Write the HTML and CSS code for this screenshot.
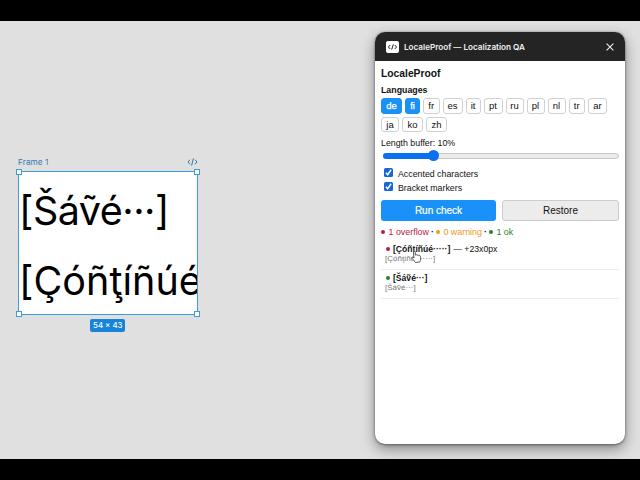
FILE: index.html
```
<!DOCTYPE html>
<html lang="en">
<head>
<meta charset="utf-8">
<title>LocaleProof</title>
<link rel="stylesheet" href="styles.css">
</head>
<body>
<main class="canvas">
  <section class="frame">
    <div class="frame-label"><span>Frame 1</span>
      <svg width="11" height="8" viewBox="0 0 11 8" fill="none" stroke="currentColor" stroke-width="1"><path d="M3 1.7 1 4l2 2.3M8 1.7 10 4 8 6.3M6.4.5 4.6 7.5"/></svg>
    </div>
    <div class="frame-box">
      <div class="frame-clip">
        <p class="sample save">[Šáṽé···]</p>
        <p class="sample cont">[Çóñţíñúé·····]</p>
      </div>
      <i class="handle tl"></i><i class="handle tr"></i><i class="handle bl"></i><i class="handle br"></i>
    </div>
    <div class="size">54 × 43</div>
  </section>

  <section class="panel">
    <header class="titlebar">
      <span class="logo"><svg width="13" height="12" viewBox="0 0 13 12" fill="none" stroke="#222" stroke-width="1"><path d="M4.3 4 2.4 6l1.9 2M8.7 4l1.9 2-1.9 2M7.3 3.4 5.7 8.6"/></svg></span>
      <span class="title">LocaleProof — Localization QA</span>
      <svg class="close" width="8" height="8" viewBox="0 0 8 8" stroke="#eee" stroke-width="1.1"><path d="M.6.6l6.8 6.8M7.4.6.6 7.4"/></svg>
    </header>
    <div class="body">
      <h1>LocaleProof</h1>
      <h2>Languages</h2>
      <div class="chips">
        <span class="chip on w21">de</span><span class="chip on w15">fi</span><span class="chip w16">fr</span><span class="chip w20">es</span><span class="chip w15">it</span><span class="chip w19">pt</span><span class="chip w18">ru</span><span class="chip w18">pl</span><span class="chip w18">nl</span><span class="chip w16">tr</span><span class="chip w19">ar</span><span class="chip w18">ja</span><span class="chip w21">ko</span><span class="chip w21">zh</span>
      </div>
      <div class="buffer">Length buffer: 10%</div>
      <div class="slider"><div class="fill"></div><div class="thumb"></div></div>
      <label class="check"><span class="box"><svg width="9" height="9" viewBox="0 0 9 9" fill="none" stroke="#fff" stroke-width="1.5"><path d="M1.9 4.7 3.7 6.7 7.1 1.8"/></svg></span>Accented characters</label>
      <label class="check"><span class="box"><svg width="9" height="9" viewBox="0 0 9 9" fill="none" stroke="#fff" stroke-width="1.5"><path d="M1.9 4.7 3.7 6.7 7.1 1.8"/></svg></span>Bracket markers</label>
      <div class="actions"><button class="run">Run check</button><button class="restore">Restore</button></div>
      <div class="summary"><span class="red"><i class="dot"></i>1 overflow</span><b>·</b><span class="orange"><i class="dot"></i>0 warning</span><b>·</b><span class="green"><i class="dot"></i>1 ok</span></div>
      <div class="result">
        <div class="line"><i class="dot red"></i><strong>[Çóñţíñúé·····]</strong><span class="delta">— +23x0px</span></div>
        <div class="sub">[Çóñţíñúé·····]</div>
      </div>
      <div class="result">
        <div class="line"><i class="dot green"></i><strong>[Šáṽé···]</strong></div>
        <div class="sub">[Šáṽé···]</div>
      </div>
    </div>
    <svg class="cursor" width="11" height="14" viewBox="0 0 11 14" fill="#fff" stroke="#333" stroke-width=".8" stroke-linejoin="round"><path d="M3 8 2.4 2.1C2.3.7 3.8.5 4 1.8l.5 3.4c.2-.8 1.4-.8 1.6.1.4-.7 1.5-.5 1.6.3.5-.5 1.5-.2 1.6.6.5 2.4.5 3.7-.5 5.8L4.5 12.5C3.6 10.9 2 9.6 1 8.2.4 7.2 1.6 6.6 3 8Z"/></svg>
  </section>
</main>
</body>
</html>
```
FILE: styles.css
```
* { box-sizing: border-box; margin: 0; padding: 0; }
body {
  width: 640px; height: 480px; overflow: hidden;
  background: #000; padding: 21px 0;
  font-family: "Liberation Sans", Arial, sans-serif;
}
.canvas { position: relative; height: 438px; background: #e0e0e0; overflow: hidden; }

/* Selected frame on the canvas */
.frame { position: absolute; left: 18px; top: 135px; width: 179.5px; font-family: Inter, sans-serif; }
.frame-label {
  display: flex; justify-content: space-between; align-items: center;
  height: 11px; margin-bottom: 4px; color: #3678b5; font-size: 8.2px; letter-spacing: .1px;
}
.frame-box { position: relative; height: 144px; border: 1px solid #3e9cdb; background: #fff; }
.frame-clip { overflow: hidden; height: 142px; padding-top: 14px; }
.sample { color: #000; font-size: 39.5px; line-height: 50px; height: 70px; white-space: nowrap; }
.save { letter-spacing: -.5px; }
.cont { letter-spacing: .05px; }
.handle { position: absolute; width: 6px; height: 6px; background: #fff; border: 1px solid #3e9cdb; }
.tl { left: -3px; top: -3px; }
.tr { right: -3px; top: -3px; }
.bl { left: -3px; bottom: -3px; }
.br { right: -3px; bottom: -3px; }
.size {
  width: 35px; height: 13px; margin: 4px auto 0; border-radius: 2px;
  background: #1784dc; color: #fff; font-size: 7.8px; font-weight: 500; line-height: 13px; text-align: center; white-space: nowrap;
}

/* Plugin window */
.panel {
  position: absolute; left: 375px; top: 11px; width: 250px; height: 412px;
  border-radius: 10px; background: #fff;
  box-shadow: 0 0 1px #555, 0 1px 3px rgba(0,0,0,.4), 0 5px 14px rgba(0,0,0,.4);
}
.titlebar {
  display: flex; align-items: center; height: 29px; padding: 0 11px;
  border-radius: 10px 10px 0 0; background: #242424; color: #f2f2f2;
}
.logo { display: flex; width: 13px; height: 12px; border-radius: 2px; background: #fff; }
.title { flex: 1; margin-left: 5px; font-family: Inter, sans-serif; font-size: 8.15px; font-weight: 600; white-space: nowrap; }
.body { padding: 5px 6px 0; color: #111; font-size: 9px; }
h1 { font-size: 10.3px; line-height: 16px; height: 15px; }
h2 { font-size: 8.8px; line-height: 18px; height: 17px; }
.chips { display: flex; flex-wrap: wrap; gap: 3px; width: 236px; }
.chip {
  height: 15.5px; border: 1px solid #d0d0d0; border-radius: 3px;
  background: #fff; font-size: 9.5px; line-height: 13px; text-align: center;
}
.chip.on { border-color: #1a91f4; background: #1a91f4; color: #fff; -webkit-text-stroke: .25px #fff; }
.w15 { width: 15px; } .w16 { width: 16.5px; } .w18 { width: 18px; }
.w19 { width: 19px; } .w20 { width: 20px; } .w21 { width: 21px; }
.buffer { height: 17px; margin-top: 3px; line-height: 17px; font-size: 8.8px; }
.slider { position: relative; height: 6px; margin: 1px 0 0 2px; border: 1px solid #c8c8c8; border-radius: 3px; background: #ebebeb; }
.fill { width: 50px; height: 6px; margin: -1px; border-radius: 3px; background: #0b6ff2; }
.thumb { position: absolute; left: 44px; top: -4px; width: 11px; height: 11px; border-radius: 50%; background: #0b6ff2; }
.check { display: flex; align-items: center; height: 14px; padding-left: 3px; font-size: 8.8px; }
.slider + .check { margin-top: 8px; }
.box { display: flex; width: 9px; height: 9px; margin: -3px 5px 0 0; border-radius: 1.5px; background: #1767d2; }
.actions { display: flex; gap: 6px; margin-top: 5px; }
button { height: 21px; border-radius: 3px; font: 10px "Liberation Sans", Arial, sans-serif; }
.run { width: 115px; border: 0; background: #1a91f9; color: #fff; -webkit-text-stroke: .2px #fff; }
.restore { width: 117px; border: 1px solid #ccc; background: #ececec; color: #111; }
.summary { display: flex; height: 20px; padding-top: 1px; align-items: center; white-space: nowrap; font-size: 8.9px; }
.summary b { width: 7px; text-align: center; }
.dot { display: inline-block; width: 4px; height: 4px; border-radius: 50%; background: currentColor; margin-right: 3.5px; vertical-align: 1px; }
.red { color: #b91c41; }
.orange { color: #ed9a22; }
.green { color: #2e7d32; }
.result { height: 29px; padding: 2px 0 0 4px; border-bottom: 1px solid #ededed; }
.line { display: flex; align-items: center; height: 11px; white-space: nowrap; }
.line strong { font-size: 8.6px; }
.line .dot { margin-left: 1px; margin-right: 3px; }
.sub { color: #777; font-size: 8px; line-height: 10px; }
.delta { margin-left: 3px; font-size: 8.7px; }
.cursor { position: absolute; left: 36px; top: 218px; }
```
